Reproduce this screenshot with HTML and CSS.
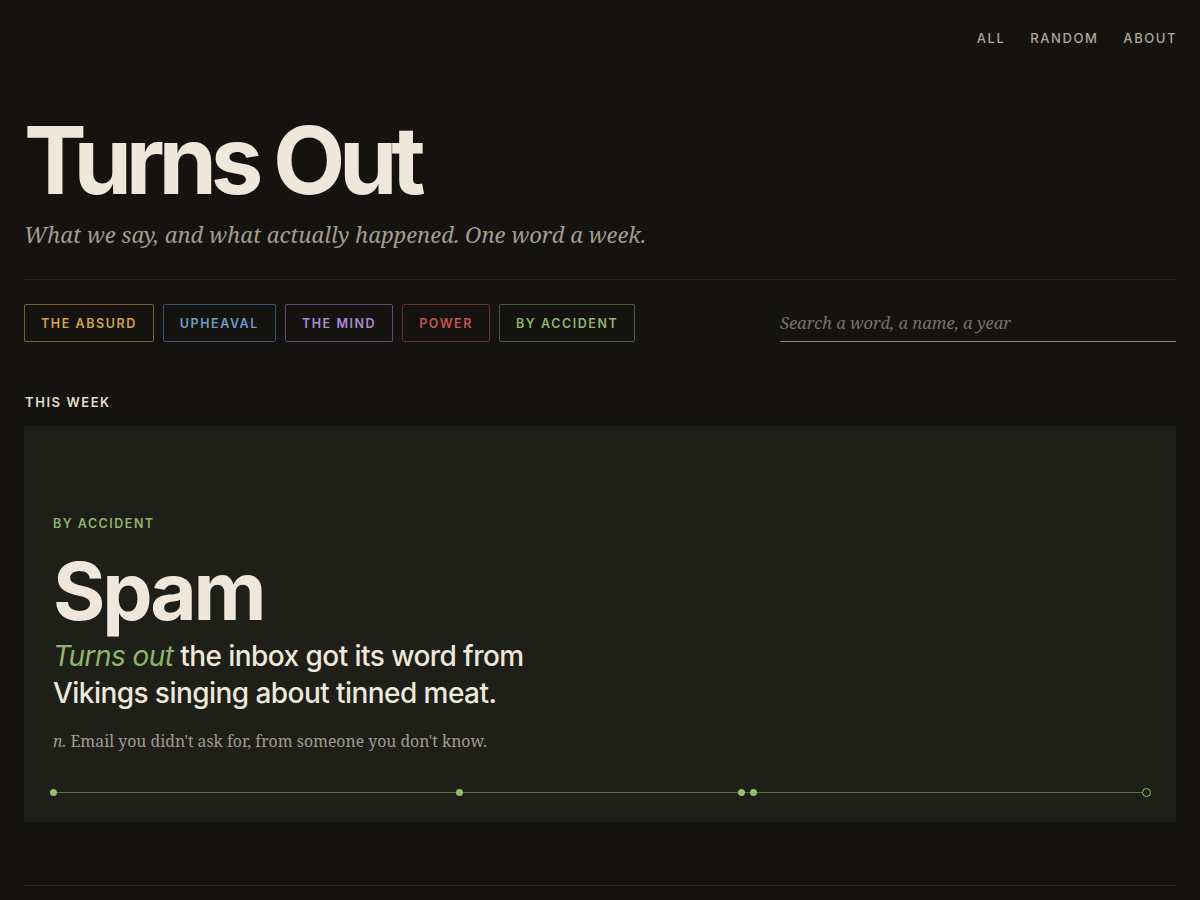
FILE: index.html
```html
<!DOCTYPE html>
<html lang="en">
<head>
<meta charset="utf-8">
<title>Turns Out</title>
<link rel="stylesheet" href="styles.css">
</head>
<body>
<div class="page">
  <nav class="nav">
    <a href="#">ALL</a>
    <a href="#">RANDOM</a>
    <a href="#">ABOUT</a>
  </nav>
  <header class="masthead">
    <h1 class="title">Turns Out</h1>
    <p class="tagline">What we say, and what actually happened. One word a week.</p>
  </header>
  <div class="filters">
    <div class="tags">
      <span class="tag absurd">THE ABSURD</span>
      <span class="tag upheaval">UPHEAVAL</span>
      <span class="tag mind">THE MIND</span>
      <span class="tag power">POWER</span>
      <span class="tag accident">BY ACCIDENT</span>
    </div>
    <div class="search">Search a word, a name, a year</div>
  </div>
  <h2 class="section-label">THIS WEEK</h2>
  <article class="feature">
    <div class="cat">BY ACCIDENT</div>
    <h3 class="word">Spam</h3>
    <p class="hook"><em>Turns out</em> the inbox got its word from Vikings singing about tinned meat.</p>
    <p class="def"><i>n.</i> Email you didn't ask for, from someone you don't know.</p>
    <div class="timeline">
      <span class="dot" style="left:0%"></span>
      <span class="dot" style="left:37.1%"></span>
      <span class="dot" style="left:62.9%"></span>
      <span class="dot" style="left:64%"></span>
      <span class="dot hollow" style="left:100%"></span>
    </div>
  </article>
  <div class="rule-bottom"></div>
</div>
</body>
</html>
```
FILE: styles.css
```css
* { box-sizing: border-box; margin: 0; padding: 0; }
html, body { background: #14130f; }
body { font-family: Inter, "Liberation Sans", sans-serif; color: #ede6da; }
.page { padding: 0 24px; }
.nav { display: flex; justify-content: flex-end; gap: 26px; padding-top: 31px; height: 64px; }
.nav a { color: #b0a898; text-decoration: none; font-size: 13px; font-weight: 500; letter-spacing: 0.12em; line-height: 15px; margin-right: -1px; }
.masthead { padding-top: 48px; padding-bottom: 30px; border-bottom: 1px solid #2b2924; }
.title { font-size: 94px; font-weight: 700; letter-spacing: -0.067em; line-height: 96px; color: #eee7da; margin-left: 0; }
.tagline { font-family: "Noto Serif", "DejaVu Serif", serif; font-style: italic; font-size: 22px; color: #a29c8f; margin-top: 11px; line-height: 30px; }
.filters { display: flex; justify-content: space-between; align-items: center; padding-top: 24px; }
.tags { display: flex; gap: 9px; }
.tag { height: 38px; display: flex; align-items: center; padding: 0 16px; border: 1px solid; border-radius: 2px; font-size: 12.5px; font-weight: 600; letter-spacing: 0.125em; }
.absurd { color: #d0a54c; border-color: #7a6230; }
.upheaval { color: #6f9ccb; border-color: #3b5570; }
.mind { color: #a98ad8; border-color: #5e4e7a; }
.power { color: #c9524e; border-color: #6a2f2c; }
.accident { color: #8fb56b; border-color: #4b5b3a; }
.search { width: 396px; height: 38px; border-bottom: 1px solid #8a8377; font-family: "Noto Serif", "DejaVu Serif", serif; font-style: italic; font-size: 16.5px; color: #77716a; padding-top: 7px; }
.section-label { font-size: 13px; font-weight: 600; letter-spacing: 0.12em; color: #e0dacd; margin-top: 52px; line-height: 16px; margin-left: 1px; }
.feature { background: #1e1f18; margin-top: 16px; padding: 90px 29px 29px; }
.cat { font-size: 12.5px; font-weight: 600; letter-spacing: 0.12em; color: #8fb56b; line-height: 16px; }
.word { font-size: 80px; font-weight: 700; letter-spacing: -0.04em; line-height: 84px; margin-top: 17px; color: #eee7da; }
.hook { font-size: 28px; font-weight: 500; line-height: 37px; max-width: 490px; color: #eee7da; letter-spacing: -0.02em; margin-top: 5px; }
.hook em { color: #8fb56b; font-weight: 400; }
.def { font-family: "Noto Serif", "DejaVu Serif", serif; font-size: 15.8px; color: #a29c8f; margin-top: 17px; line-height: 24px; }
.timeline { position: relative; height: 1px; background: #5f6e4b; margin-top: 39px; }
.dot { position: absolute; top: -3px; width: 7px; height: 7px; margin-left: -3px; border-radius: 50%; background: #93bf6c; }
.dot.hollow { background: #1e1f18; border: 1px solid #93bf6c; width: 9px; height: 9px; top: -4px; margin-left: -5px; }
.rule-bottom { border-top: 1px solid #2b2924; margin-top: 63px; }
```
